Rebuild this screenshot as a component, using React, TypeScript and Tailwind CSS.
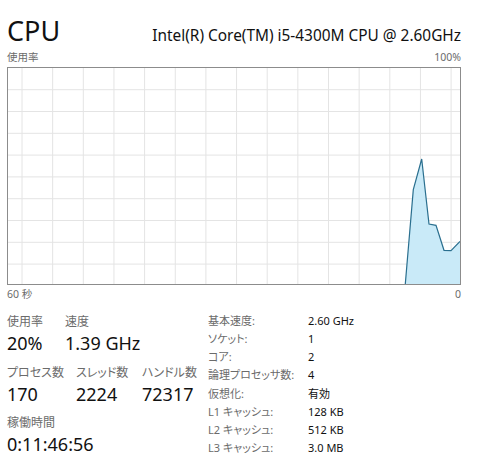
import React from "react";

const FONT = {
  fontFamily: '"Segoe UI", "Noto Sans", "Noto Sans CJK JP", sans-serif',
};

// グラフ内部 (枠線の内側) の座標
const W = 452;
const H = 216;
const vLines = Array.from({ length: 15 }, (_, k) => 14 + k * 30.65);
const hLines = Array.from({ length: 9 }, (_, k) => 21.7 + k * 21.8);

const usage: [number, number][] = [
  [397.3, 216],
  [405.3, 121.7],
  [413.7, 91],
  [421, 156],
  [428, 157.3],
  [436, 182.3],
  [443, 182.7],
  [452, 173.5],
];

function CpuGraph() {
  const line = usage.map(([x, y]) => `${x},${y}`).join(" ");
  const area = `${line} ${W},${H} ${usage[0][0]},${H}`;
  return (
    <div className="w-[454px] h-[218px] border border-[#8c8c8c] bg-white">
      <svg width={W} height={H} viewBox={`0 0 ${W} ${H}`} className="block">
        {vLines.map((x) => (
          <line key={`v${x}`} x1={x} y1={0} x2={x} y2={H} stroke="#e4e4e4" strokeWidth={1} />
        ))}
        {hLines.map((y) => (
          <line key={`h${y}`} x1={0} y1={y} x2={W} y2={y} stroke="#e4e4e4" strokeWidth={1} />
        ))}
        <polygon points={area} fill="#c9eaf8" />
        <polyline points={line} fill="none" stroke="#2a6f8f" strokeWidth={1.2} />
      </svg>
    </div>
  );
}

function Stat({ label, value, w }: { label: string; value: string; w: string }) {
  return (
    <div className={`flex flex-col ${w}`}>
      <span className="text-[12px] leading-[16px] text-[#6b6b6b]">{label}</span>
      <span className="text-[18px] leading-[26px] text-[#111]">{value}</span>
    </div>
  );
}

const specs: [string, string][] = [
  ["基本速度:", "2.60 GHz"],
  ["ソケット:", "1"],
  ["コア:", "2"],
  ["論理プロセッサ数:", "4"],
  ["仮想化:", "有効"],
  ["L1 キャッシュ:", "128 KB"],
  ["L2 キャッシュ:", "512 KB"],
  ["L3 キャッシュ:", "3.0 MB"],
];

export default function App() {
  return (
    <div
      className="w-[482px] h-[475px] bg-white pl-[7px] pt-[17px] overflow-hidden [font-feature-settings:'palt']"
      style={FONT}
    >
      {/* Header */}
      <div className="flex items-baseline justify-between w-[454px]">
        <h1 className="text-[27px] leading-[28px] text-[#111] font-normal">CPU</h1>
        <span className="text-[15.4px] leading-[20px] text-[#111]">
          Intel(R) Core(TM) i5-4300M CPU @ 2.60GHz
        </span>
      </div>

      <div className="flex justify-between w-[454px] mt-[4px] text-[10.5px] leading-[14px] text-[#6b6b6b]">
        <span>使用率</span>
        <span>100%</span>
      </div>

      <div className="mt-[3px]">
        <CpuGraph />
      </div>

      <div className="flex justify-between w-[454px] mt-[2px] text-[10.5px] leading-[14px] text-[#6b6b6b]">
        <span>60 秒</span>
        <span>0</span>
      </div>

      {/* Stats */}
      <div className="flex mt-[13px]">
        <div className="flex flex-col w-[201px]">
          <div className="flex">
            <Stat label="使用率" value="20%" w="w-[58px]" />
            <Stat label="速度" value="1.39 GHz" w="w-[100px]" />
          </div>
          <div className="flex mt-[9px]">
            <Stat label="プロセス数" value="170" w="w-[69px]" />
            <Stat label="スレッド数" value="2224" w="w-[66px]" />
            <Stat label="ハンドル数" value="72317" w="w-[66px]" />
          </div>
          <div className="flex mt-[8px]">
            <Stat label="稼働時間" value="0:11:46:56" w="w-[120px]" />
          </div>
        </div>

        <div className="grid grid-cols-[100px_auto] mt-[-2px] text-[11px] leading-[17.9px]">
          {specs.map(([k, v]) => (
            <React.Fragment key={k}>
              <span className="text-[#6b6b6b]">{k}</span>
              <span className="text-[#111]">{v}</span>
            </React.Fragment>
          ))}
        </div>
      </div>
    </div>
  );
}
